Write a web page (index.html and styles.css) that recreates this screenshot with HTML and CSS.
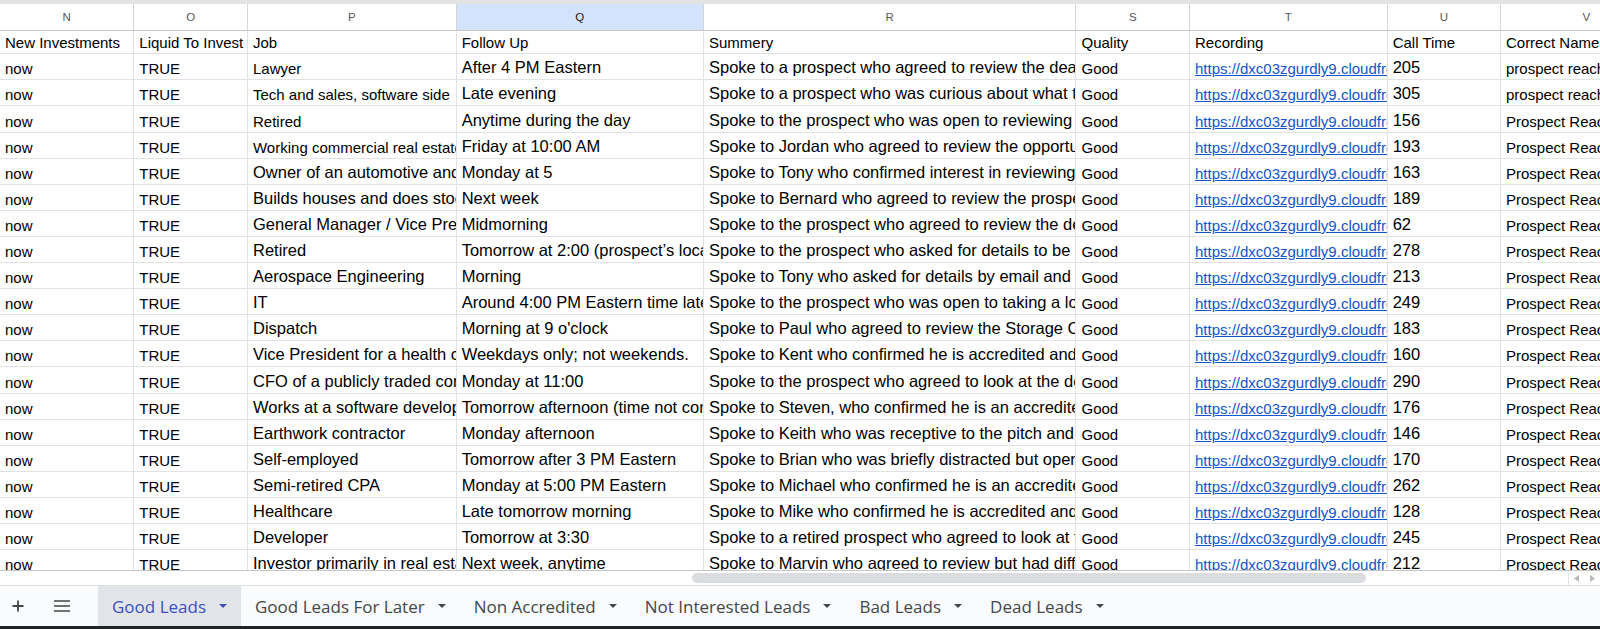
FILE: index.html
```html
<!DOCTYPE html>
<html lang="en">
<head>
<meta charset="utf-8">
<title>Good Leads</title>
<link rel="stylesheet" href="styles.css">
</head>
<body>
<div class="app">
  <div class="topstrip"></div>
  <div class="viewport">
    <div class="sheet">
      <div class="ch">N</div><div class="ch">O</div><div class="ch">P</div><div class="ch sel">Q</div><div class="ch">R</div><div class="ch">S</div><div class="ch">T</div><div class="ch">U</div><div class="ch">V</div>

      <div class="c">New Investments</div><div class="c">Liquid To Invest</div><div class="c">Job</div><div class="c">Follow Up</div><div class="c">Summery</div><div class="c">Quality</div><div class="c">Recording</div><div class="c">Call Time</div><div class="c">Correct Name</div>

      <div class="c">now</div><div class="c">TRUE</div><div class="c">Lawyer</div><div class="c big">After 4 PM Eastern</div><div class="c big">Spoke to a prospect who agreed to review the deal materials and follow up.</div><div class="c">Good</div><div class="c"><span class="lnk">https://dxc03zgurdly9.cloudfront.net/recordings/a1.mp3</span></div><div class="c big">205</div><div class="c">prospect reached</div>

      <div class="c">now</div><div class="c">TRUE</div><div class="c">Tech and sales, software side</div><div class="c big">Late evening</div><div class="c big">Spoke to a prospect who was curious about what the fund invests in.</div><div class="c">Good</div><div class="c"><span class="lnk">https://dxc03zgurdly9.cloudfront.net/recordings/a2.mp3</span></div><div class="c big">305</div><div class="c">prospect reached</div>

      <div class="c">now</div><div class="c">TRUE</div><div class="c">Retired</div><div class="c big">Anytime during the day</div><div class="c big">Spoke to the prospect who was open to reviewing the offering details.</div><div class="c">Good</div><div class="c"><span class="lnk">https://dxc03zgurdly9.cloudfront.net/recordings/a3.mp3</span></div><div class="c big">156</div><div class="c">Prospect Reached</div>

      <div class="c">now</div><div class="c">TRUE</div><div class="c">Working commercial real estate</div><div class="c big">Friday at 10:00 AM</div><div class="c big">Spoke to Jordan who agreed to review the opportunity by email.</div><div class="c">Good</div><div class="c"><span class="lnk">https://dxc03zgurdly9.cloudfront.net/recordings/a4.mp3</span></div><div class="c big">193</div><div class="c">Prospect Reached</div>

      <div class="c">now</div><div class="c">TRUE</div><div class="c big">Owner of an automotive and collision business</div><div class="c big">Monday at 5</div><div class="c big">Spoke to Tony who confirmed interest in reviewing the materials.</div><div class="c">Good</div><div class="c"><span class="lnk">https://dxc03zgurdly9.cloudfront.net/recordings/a5.mp3</span></div><div class="c big">163</div><div class="c">Prospect Reached</div>

      <div class="c">now</div><div class="c">TRUE</div><div class="c big">Builds houses and does stock trading</div><div class="c big">Next week</div><div class="c big">Spoke to Bernard who agreed to review the prospectus.</div><div class="c">Good</div><div class="c"><span class="lnk">https://dxc03zgurdly9.cloudfront.net/recordings/a6.mp3</span></div><div class="c big">189</div><div class="c">Prospect Reached</div>

      <div class="c">now</div><div class="c">TRUE</div><div class="c big">General Manager / Vice President</div><div class="c big">Midmorning</div><div class="c big">Spoke to the prospect who agreed to review the deal.</div><div class="c">Good</div><div class="c"><span class="lnk">https://dxc03zgurdly9.cloudfront.net/recordings/a7.mp3</span></div><div class="c big">62</div><div class="c">Prospect Reached</div>

      <div class="c">now</div><div class="c">TRUE</div><div class="c big">Retired</div><div class="c big">Tomorrow at 2:00 (prospect’s local time)</div><div class="c big">Spoke to the prospect who asked for details to be emailed.</div><div class="c">Good</div><div class="c"><span class="lnk">https://dxc03zgurdly9.cloudfront.net/recordings/a8.mp3</span></div><div class="c big">278</div><div class="c">Prospect Reached</div>

      <div class="c">now</div><div class="c">TRUE</div><div class="c big">Aerospace Engineering</div><div class="c big">Morning</div><div class="c big">Spoke to Tony who asked for details by email and a callback.</div><div class="c">Good</div><div class="c"><span class="lnk">https://dxc03zgurdly9.cloudfront.net/recordings/a9.mp3</span></div><div class="c big">213</div><div class="c">Prospect Reached</div>

      <div class="c">now</div><div class="c">TRUE</div><div class="c big">IT</div><div class="c big">Around 4:00 PM Eastern time later today</div><div class="c big">Spoke to the prospect who was open to taking a look at the deal.</div><div class="c">Good</div><div class="c"><span class="lnk">https://dxc03zgurdly9.cloudfront.net/recordings/b1.mp3</span></div><div class="c big">249</div><div class="c">Prospect Reached</div>

      <div class="c">now</div><div class="c">TRUE</div><div class="c big">Dispatch</div><div class="c big">Morning at 9 o'clock</div><div class="c big">Spoke to Paul who agreed to review the Storage Center offering.</div><div class="c">Good</div><div class="c"><span class="lnk">https://dxc03zgurdly9.cloudfront.net/recordings/b2.mp3</span></div><div class="c big">183</div><div class="c">Prospect Reached</div>

      <div class="c">now</div><div class="c">TRUE</div><div class="c big">Vice President for a health care company</div><div class="c big">Weekdays only; not weekends.</div><div class="c big">Spoke to Kent who confirmed he is accredited and interested.</div><div class="c">Good</div><div class="c"><span class="lnk">https://dxc03zgurdly9.cloudfront.net/recordings/b3.mp3</span></div><div class="c big">160</div><div class="c">Prospect Reached</div>

      <div class="c">now</div><div class="c">TRUE</div><div class="c big">CFO of a publicly traded company</div><div class="c big">Monday at 11:00</div><div class="c big">Spoke to the prospect who agreed to look at the deal.</div><div class="c">Good</div><div class="c"><span class="lnk">https://dxc03zgurdly9.cloudfront.net/recordings/b4.mp3</span></div><div class="c big">290</div><div class="c">Prospect Reached</div>

      <div class="c">now</div><div class="c">TRUE</div><div class="c big">Works at a software development company</div><div class="c big">Tomorrow afternoon (time not confirmed)</div><div class="c big">Spoke to Steven, who confirmed he is an accredited investor.</div><div class="c">Good</div><div class="c"><span class="lnk">https://dxc03zgurdly9.cloudfront.net/recordings/b5.mp3</span></div><div class="c big">176</div><div class="c">Prospect Reached</div>

      <div class="c">now</div><div class="c">TRUE</div><div class="c big">Earthwork contractor</div><div class="c big">Monday afternoon</div><div class="c big">Spoke to Keith who was receptive to the pitch and asked for more.</div><div class="c">Good</div><div class="c"><span class="lnk">https://dxc03zgurdly9.cloudfront.net/recordings/b6.mp3</span></div><div class="c big">146</div><div class="c">Prospect Reached</div>

      <div class="c">now</div><div class="c">TRUE</div><div class="c big">Self-employed</div><div class="c big">Tomorrow after 3 PM Eastern</div><div class="c big">Spoke to Brian who was briefly distracted but open to a callback.</div><div class="c">Good</div><div class="c"><span class="lnk">https://dxc03zgurdly9.cloudfront.net/recordings/b7.mp3</span></div><div class="c big">170</div><div class="c">Prospect Reached</div>

      <div class="c">now</div><div class="c">TRUE</div><div class="c big">Semi-retired CPA</div><div class="c big">Monday at 5:00 PM Eastern</div><div class="c big">Spoke to Michael who confirmed he is an accredited investor.</div><div class="c">Good</div><div class="c"><span class="lnk">https://dxc03zgurdly9.cloudfront.net/recordings/b8.mp3</span></div><div class="c big">262</div><div class="c">Prospect Reached</div>

      <div class="c">now</div><div class="c">TRUE</div><div class="c big">Healthcare</div><div class="c big">Late tomorrow morning</div><div class="c big">Spoke to Mike who confirmed he is accredited and interested.</div><div class="c">Good</div><div class="c"><span class="lnk">https://dxc03zgurdly9.cloudfront.net/recordings/b9.mp3</span></div><div class="c big">128</div><div class="c">Prospect Reached</div>

      <div class="c">now</div><div class="c">TRUE</div><div class="c big">Developer</div><div class="c big">Tomorrow at 3:30</div><div class="c big">Spoke to a retired prospect who agreed to look at the materials.</div><div class="c">Good</div><div class="c"><span class="lnk">https://dxc03zgurdly9.cloudfront.net/recordings/c1.mp3</span></div><div class="c big">245</div><div class="c">Prospect Reached</div>

      <div class="c">now</div><div class="c">TRUE</div><div class="c big">Investor primarily in real estate</div><div class="c big">Next week, anytime</div><div class="c big">Spoke to Marvin who agreed to review but had difficulty hearing.</div><div class="c">Good</div><div class="c"><span class="lnk">https://dxc03zgurdly9.cloudfront.net/recordings/c2.mp3</span></div><div class="c big">212</div><div class="c">Prospect Reached</div>
    </div>
  </div>

  <div class="hscroll">
    <div class="thumb"></div>
    <div class="arrows">
      <svg class="arr" width="5" height="7" viewBox="0 0 5 7"><polygon points="5,0 5,7 0,3.5" fill="#b8b8b8"/></svg>
      <svg class="arr" width="5" height="7" viewBox="0 0 5 7"><polygon points="0,0 0,7 5,3.5" fill="#b8b8b8"/></svg>
    </div>
  </div>

  <div class="tabbar">
    <div class="iconbtn">
      <svg width="12" height="12" viewBox="0 0 12 12"><path d="M6 0.5V11.5M0.5 6H11.5" stroke="#444746" stroke-width="1.8" fill="none"/></svg>
    </div>
    <div class="iconbtn menu">
      <svg width="16" height="12" viewBox="0 0 16 12"><path d="M0 1H16M0 6H16M0 11H16" stroke="#444746" stroke-width="1.6" fill="none"/></svg>
    </div>
    <div class="tabs">
      <div class="tab active">Good Leads<svg class="dd" width="8" height="4" viewBox="0 0 8 4"><polygon points="0,0 8,0 4,4"/></svg></div>
      <div class="tab">Good Leads For Later<svg class="dd" width="8" height="4" viewBox="0 0 8 4"><polygon points="0,0 8,0 4,4"/></svg></div>
      <div class="tab">Non Accredited<svg class="dd" width="8" height="4" viewBox="0 0 8 4"><polygon points="0,0 8,0 4,4"/></svg></div>
      <div class="tab">Not Interested Leads<svg class="dd" width="8" height="4" viewBox="0 0 8 4"><polygon points="0,0 8,0 4,4"/></svg></div>
      <div class="tab">Bad Leads<svg class="dd" width="8" height="4" viewBox="0 0 8 4"><polygon points="0,0 8,0 4,4"/></svg></div>
      <div class="tab">Dead Leads<svg class="dd" width="8" height="4" viewBox="0 0 8 4"><polygon points="0,0 8,0 4,4"/></svg></div>
    </div>
  </div>
  <div class="bottombar"></div>
</div>
</body>
</html>
```

FILE: styles.css
```css
html, body {
  margin: 0;
  padding: 0;
  background: #ffffff;
}
body {
  width: 1600px;
  height: 629px;
  overflow: hidden;
}
.app {
  display: flex;
  flex-direction: column;
  width: 1600px;
  height: 629px;
}
.topstrip {
  flex: none;
  height: 4px;
  background: #e3e3e3;
}
.viewport {
  flex: none;
  height: 567px;
  overflow: hidden;
  border-bottom: 1px solid #c4c7c5;
  box-sizing: border-box;
}
.sheet {
  display: grid;
  grid-template-columns: 134.3px 113.7px 208.7px 247.3px 372.5px 113.5px 197.7px 113.3px 172px;
  grid-template-rows: 26.7px 23.6px;
  grid-auto-rows: 26.1px;
  width: max-content;
}
.ch {
  display: flex;
  align-items: center;
  justify-content: center;
  box-sizing: border-box;
  border-right: 1px solid #d6d6d6;
  border-bottom: 1px solid #c7c7c7;
  font-family: "Liberation Sans", Arial, sans-serif;
  font-size: 11.5px;
  color: #575757;
  background: #ffffff;
}
.ch.sel {
  background: #d3e3fd;
  color: #1f1f1f;
}
.c {
  display: flex;
  align-items: flex-end;
  box-sizing: border-box;
  border-right: 1px solid #e2e2e2;
  border-bottom: 1px solid #e2e2e2;
  padding: 0 3px 2px 5px;
  white-space: nowrap;
  overflow: hidden;
  font-family: "Liberation Sans", Arial, sans-serif;
  font-size: 15px;
  line-height: normal;
  color: #000000;
}
.c.big {
  font-size: 16.5px;
}
.lnk {
  color: #1155cc;
  text-decoration: underline;
}
.hscroll {
  flex: none;
  height: 14px;
  display: flex;
  align-items: flex-start;
  background: #ffffff;
}
.thumb {
  margin-left: 692px;
  margin-top: 2px;
  width: 674px;
  height: 10px;
  border-radius: 5px;
  background: #dadce0;
}
.arrows {
  margin-left: auto;
  height: 14px;
  width: 32px;
  display: flex;
  align-items: center;
  justify-content: space-around;
  border-left: 1px solid #e3e3e3;
  box-sizing: border-box;
}
.arr {
  display: block;
}
.tabbar {
  flex: none;
  height: 41px;
  box-sizing: border-box;
  border-top: 1px solid #e0e0e0;
  background: #f9fbfd;
  display: flex;
  align-items: stretch;
}
.iconbtn {
  width: 36px;
  display: flex;
  align-items: center;
  justify-content: center;
}
.iconbtn.menu {
  margin-left: 8px;
}
.tabs {
  margin-left: 18px;
  display: flex;
  align-items: stretch;
}
.tab {
  display: flex;
  align-items: center;
  gap: 13px;
  padding: 0 14px;
  font-family: "Open Sans", "Noto Sans", sans-serif;
  font-size: 17px;
  font-weight: 500;
  color: #444746;
  white-space: nowrap;
}
.tab .dd {
  fill: #444746;
}
.tab.active {
  background: #e1e5ea;
  color: #3a4fc1;
}
.tab.active .dd {
  fill: #3a4fc1;
}
.bottombar {
  flex: none;
  height: 3px;
  background: #1d2625;
}
```
